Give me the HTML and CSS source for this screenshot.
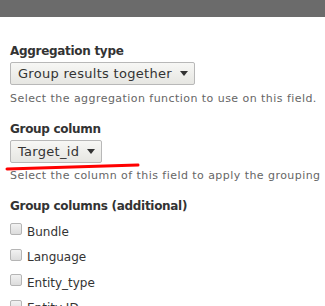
FILE: index.html
```html
<!DOCTYPE html>
<html>
<head>
    <title>Aggregation settings</title>
    <link rel="stylesheet" href="styles.css">
</head>
<body>
    <div class="topbar"></div>

    <div class="form">
        <div class="form-item">
            <label class="form-label">Aggregation type</label>
            <div class="select">Group results together <span class="arrow"></span></div>
            <div class="description">Select the aggregation function to use on this field.</div>
        </div>

        <div class="form-item marked">
            <label class="form-label">Group column</label>
            <div class="select">Target_id <span class="arrow"></span></div>
            <!-- red underline annotation -->
            <svg class="scribble" width="140" height="8" viewBox="0 0 140 8">
                <path d="M2 6 C40 5, 90 3, 133 2" stroke="#f00" stroke-width="3" fill="none" stroke-linecap="round"/>
            </svg>
            <div class="description tight">Select the column of this field to apply the grouping</div>
        </div>

        <div class="form-item">
            <label class="form-label checks-label">Group columns (additional)</label>
            <div class="checkbox"><span class="box"></span>Bundle</div>
            <div class="checkbox"><span class="box"></span>Language</div>
            <div class="checkbox"><span class="box"></span>Entity_type</div>
            <div class="checkbox"><span class="box"></span>Entity ID</div>
        </div>
    </div>
</body>
</html>
```

FILE: styles.css
```css
body {
    margin: 0;
    background: #fff;
    font-family: "DejaVu Sans", Verdana, sans-serif;
    color: #333;
    overflow: hidden;
}
.topbar {
    height: 17px;
    background: #6b6b6b;
}
.form {
    padding: 26px 10px 0 10px;
}
.form-item {
    margin-bottom: 15px;
}
.form-label {
    display: block;
    font-size: 12px;
    font-weight: bold;
    letter-spacing: -0.3px;
    line-height: 16px;
    margin-bottom: 3px;
    color: #333;
}
.checks-label {
    margin-bottom: 5px;
}
.select {
    display: inline-flex;
    align-items: center;
    height: 21px;
    padding: 0 6px 0 7px;
    border: 1px solid #b8b8b8;
    border-radius: 2px;
    background: linear-gradient(#f7f7f5, #e6e6e2);
    font-size: 13px;
    letter-spacing: 0.3px;
    color: #333;
    white-space: nowrap;
}
.arrow {
    display: inline-block;
    width: 0;
    height: 0;
    margin-left: 8px;
    border-left: 4px solid transparent;
    border-right: 4px solid transparent;
    border-top: 5px solid #333;
}
.marked {
    position: relative;
}
.scribble {
    position: absolute;
    left: -5px;
    top: 42px;
}
.description {
    margin-top: 7px;
    font-size: 11px;
    letter-spacing: 0.45px;
    line-height: 14px;
    color: #666;
    white-space: nowrap;
}
.description.tight {
    margin-top: 6px;
}
.checkbox {
    display: flex;
    align-items: center;
    height: 25.5px;
    font-size: 12px;
    color: #333;
}
.box {
    width: 10px;
    height: 10px;
    margin-right: 5px;
    margin-bottom: 5px;
    border: 1px solid #b5b5b5;
    border-radius: 2px;
    background: linear-gradient(#f2f2f2, #dcdcdc);
}
```
